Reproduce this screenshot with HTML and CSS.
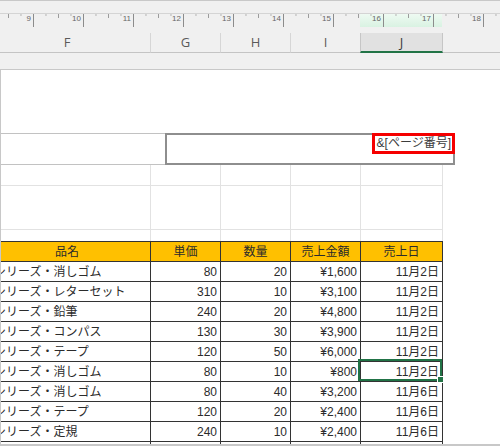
FILE: index.html
```html
<!DOCTYPE html>
<html lang="ja">
<head>
  <meta charset="UTF-8">
  <title>売上一覧 - ページレイアウト</title>
  <link rel="stylesheet" href="styles.css">
</head>
<body>
  <div class="app">
    <div class="ruler">
      <span class="mark first">9</span>
      <span class="mark">10</span>
      <span class="mark">11</span>
      <span class="mark">12</span>
      <span class="mark">13</span>
      <span class="mark">14</span>
      <span class="mark">15</span>
      <span class="mark">16</span>
      <span class="mark">17</span>
      <span class="mark">18</span>
    </div>

    <div class="colheads">
      <div class="colhead wide">F</div>
      <div class="colhead">G</div>
      <div class="colhead">H</div>
      <div class="colhead">I</div>
      <div class="colhead last selected">J</div>
      <div class="colhead rest"></div>
    </div>

    <div class="page">
      <div class="page-header">
        <div class="header-left"></div>
        <div class="header-box">
          <span class="pageno">&amp;[ページ番号]</span>
        </div>
      </div>

      <table class="sheet">
        <colgroup>
          <col class="c-name">
          <col class="c-num">
          <col class="c-num">
          <col class="c-num">
          <col class="c-date">
        </colgroup>
        <tr class="gap gap1"><td></td><td></td><td></td><td></td><td></td></tr>
        <tr class="gap gap2"><td></td><td></td><td></td><td></td><td></td></tr>
        <tr class="gap gap3"><td></td><td></td><td></td><td></td><td></td></tr>
        <tr class="head">
          <td>品名</td><td>単価</td><td>数量</td><td>売上金額</td><td>売上日</td>
        </tr>
        <tr class="data"><td class="name">シリーズ・消しゴム</td><td>80</td><td>20</td><td>¥1,600</td><td>11月2日</td></tr>
        <tr class="data"><td class="name">シリーズ・レターセット</td><td>310</td><td>10</td><td>¥3,100</td><td>11月2日</td></tr>
        <tr class="data"><td class="name">シリーズ・鉛筆</td><td>240</td><td>20</td><td>¥4,800</td><td>11月2日</td></tr>
        <tr class="data"><td class="name">シリーズ・コンパス</td><td>130</td><td>30</td><td>¥3,900</td><td>11月2日</td></tr>
        <tr class="data"><td class="name">シリーズ・テープ</td><td>120</td><td>50</td><td>¥6,000</td><td>11月2日</td></tr>
        <tr class="data"><td class="name">シリーズ・消しゴム</td><td>80</td><td>10</td><td>¥800</td><td class="sel">11月2日</td></tr>
        <tr class="data"><td class="name">シリーズ・消しゴム</td><td>80</td><td>40</td><td>¥3,200</td><td>11月6日</td></tr>
        <tr class="data"><td class="name">シリーズ・テープ</td><td>120</td><td>20</td><td>¥2,400</td><td>11月6日</td></tr>
        <tr class="data"><td class="name">シリーズ・定規</td><td>240</td><td>10</td><td>¥2,400</td><td>11月6日</td></tr>
        <tr class="data"><td class="name">シリーズ・鉛筆</td><td>240</td><td>10</td><td>¥2,400</td><td>11月6日</td></tr>
      </table>
    </div>

    <div class="frame-bottom"></div>
  </div>
</body>
</html>
```

FILE: styles.css
```css
* {
  box-sizing: border-box;
}

html, body {
  margin: 0;
}

body {
  width: 500px;
  height: 446px;
  overflow: hidden;
  background: #f0f0f0;
  font-family: "Liberation Sans", "Noto Sans CJK JP", sans-serif;
}

.app {
  height: 446px;
  display: flex;
  flex-direction: column;
  border-top: 1px solid #c8c8c8;
}

/* ruler: long tick every 50px, half and quarter ticks in between */
.ruler {
  margin-top: 12px;
  height: 14px;
  display: flex;
  border-top: 1px solid #d4d4d4;
  background:
    linear-gradient(90deg, #8c8c8c 1px, transparent 1px) 33px 0 / 50px 100% repeat-x,
    linear-gradient(90deg, #9c9c9c 1px, transparent 1px) 8px 0 / 25px 4px repeat-x,
    linear-gradient(90deg, #b0b0b0 1px, transparent 1px) 8px 0 / 12.5px 2px repeat-x,
    linear-gradient(#eefaf2, #d9f2e2) 360px 0 / 82px 100% no-repeat,
    #f0f0f0;
}

.mark {
  flex: 0 0 50px;
  text-align: right;
  padding-right: 2px;
  font-size: 8px;
  line-height: 9px;
  color: #666;
}

.mark.first {
  flex-basis: 33px;
}

/* column letters */
.colheads {
  display: flex;
  margin-top: 6px;
  margin-left: -16px;
  height: 20px;
}

.colhead {
  flex: 0 0 70px;
  border-right: 1px solid #d6d6d6;
  border-bottom: 1px solid #c4c4c4;
  text-align: center;
  font-family: "Open Sans", sans-serif;
  font-size: 13px;
  line-height: 19px;
  color: #5a5a5a;
}

.colhead.wide {
  flex-basis: 167px;
}

.colhead.last {
  flex-basis: 82px;
}

.colhead.selected {
  background: #e1e1e1;
  border-left: 1px solid #c6c6c6;
  border-right: 1px solid #c6c6c6;
  border-bottom: 2px solid #217346;
  color: #3a3a3a;
  margin-left: -1px;
  flex-basis: 83px;
}

.colhead.rest {
  flex: 1;
  border-right: none;
}

/* the printed page */
.page {
  flex: 1;
  margin-top: 16px;
  overflow: hidden;
  background: #fff;
  border-top: 1px solid #c8c8c8;
  border-left: 1px solid #c8c8c8;
  padding-top: 63px;
}

.page-header {
  display: flex;
  height: 32px;
}

.header-left {
  width: 164px;
  border-top: 1px solid #c2c2c2;
  border-bottom: 1px solid #c2c2c2;
}

.header-box {
  width: 290px;
  border: 2px solid #8e8e8e;
  display: flex;
  justify-content: flex-end;
  align-items: flex-start;
}

.pageno {
  width: 83px;
  height: 21px;
  margin: -2px -2px 0 0;
  border: 3px solid #f50000;
  background: #fff;
  text-align: right;
  padding-right: 1px;
  font-size: 12px;
  line-height: 15px;
  color: #3c3c3c;
  white-space: nowrap;
}

/* sheet grid */
.sheet {
  border-collapse: separate;
  border-spacing: 0;
  table-layout: fixed;
  width: 459px;
  margin-left: -17px;
  font-size: 12px;
  color: #2b2b2b;
}

.c-name { width: 167px; }
.c-num { width: 70px; }
.c-date { width: 82px; }

.sheet td {
  padding: 0 3px;
  white-space: nowrap;
  overflow: hidden;
  line-height: 18px;
}

.gap td {
  border-right: 1px solid #e2e2e2;
}

.gap1 td {
  height: 21px;
  border-bottom: 1px solid #e2e2e2;
}

.gap2 td {
  height: 44px;
  border-bottom: 1px solid #e2e2e2;
}

.gap3 td {
  height: 11px;
}

.head td {
  height: 21px;
  background: #ffc000;
  border-top: 1px solid #333;
  border-bottom: 1px solid #333;
  border-right: 1px solid #333;
  text-align: center;
}

.data td {
  height: 20px;
  border-bottom: 1px solid #333;
  border-right: 1px solid #333;
  text-align: right;
}

.data td.name {
  text-align: left;
  padding-left: 10px;
}

.data td.sel {
  position: relative;
  overflow: visible;
}

.data td.sel::before {
  content: "";
  position: absolute;
  top: -3px;
  left: -3px;
  right: 0;
  bottom: 0;
  border: 2px solid #217346;
}

.data td.sel::after {
  content: "";
  position: absolute;
  right: -1px;
  bottom: -1px;
  width: 5px;
  height: 5px;
  background: #217346;
  outline: 1px solid #fff;
}

.frame-bottom {
  height: 2px;
  background: #c8c8c8;
}
```
